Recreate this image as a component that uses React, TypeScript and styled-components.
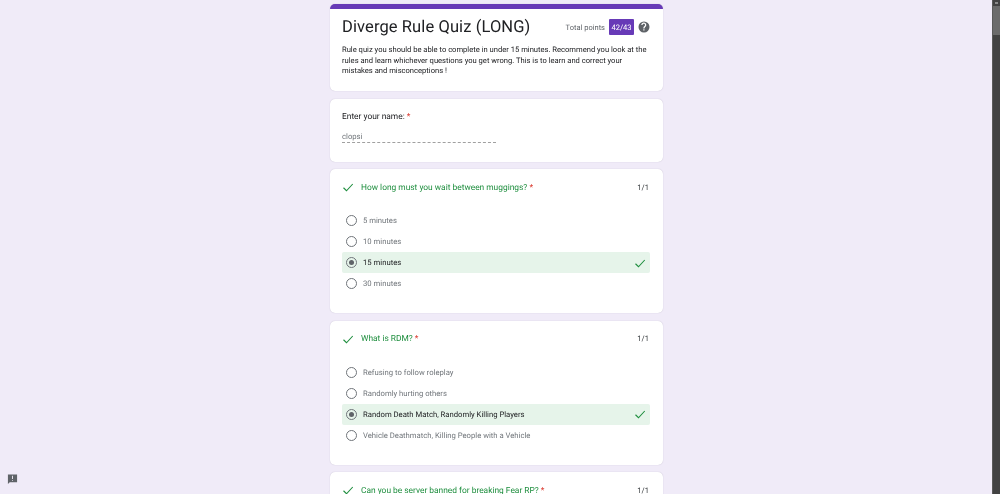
import styled, { createGlobalStyle } from "styled-components";

const purple = "#673ab7";
const green = "#1e8e3e";

const GlobalStyle = createGlobalStyle`
html, body {
    margin: 0;
    height: 100%;
    overflow: hidden;
    background: #f0ebf8;
    font-family: Roboto, "Liberation Sans", sans-serif;
    text-rendering: geometricPrecision;
}
`;

const Page = styled.div`
    display: flex;
    height: 494px;
    overflow: hidden;
`;

const Main = styled.main`
    flex: 1;
    height: 494px;
    overflow: hidden;
    display: flex;
    flex-direction: column;
    align-items: center;
    gap: 7.5px;
    padding-top: 4px;
    box-sizing: border-box;
    filter: blur(0.45px);
`;

const Scrollbar = styled.div`
    width: 8px;
    background: #424242;
    display: flex;
    flex-direction: column;
    border-left: 1px solid #5a5a5a;
    box-sizing: border-box;
`;

const ScrollArrow = styled.div`
    height: 6px;
    display: flex;
    align-items: center;
    justify-content: center;
    &::after {
        content: "";
        width: 3px;
        height: 2px;
        background: #8a8a8a;
    }
`;

const ScrollThumb = styled.div`
    height: 29px;
    background: #6b6b6b;
`;

const Card = styled.section<{ $height: number }>`
    width: 333px;
    height: ${({ $height }) => $height}px;
    flex-shrink: 0;
    background: #fff;
    border-radius: 5px;
    box-shadow: 0 0 1px rgba(60, 50, 90, 0.3);
    box-sizing: border-box;
    overflow: hidden;
`;

const HeaderCard = styled(Card)`
    border-top: 5px solid ${purple};
    padding: 0 12.5px;
`;

const TitleRow = styled.div`
    display: flex;
    align-items: center;
    height: 28px;
    margin-top: 4px;
`;

const Title = styled.h1`
    margin: 0;
    flex: 1;
    font-size: 16.5px;
    font-weight: 400;
    color: #202124;
    letter-spacing: 0.1px;
`;

const TotalLabel = styled.span`
    font-size: 7.5px;
    color: #5f6368;
`;

const ScoreBadge = styled.span`
    margin-left: 4px;
    width: 25px;
    height: 16px;
    display: flex;
    align-items: center;
    justify-content: center;
    background: ${purple};
    color: #fff;
    font-size: 7.6px;
    border-radius: 1px;
`;

const HelpIcon = styled.svg`
    margin-left: 4px;
    width: 12px;
    height: 12px;
    fill: #5f6368;
`;

const Description = styled.p`
    margin: 4px 0 0;
    font-size: 7.6px;
    line-height: 10.5px;
    color: #202124;
`;

const NameCard = styled(Card)`
    padding: 13px 12.5px 0;
`;

const Label = styled.div`
    font-size: 8.4px;
    line-height: 11px;
    color: #202124;
`;

const Required = styled.span`
    color: #d93025;
`;

const NameValue = styled.div`
    margin-top: 8px;
    width: 154px;
    height: 12px;
    font-size: 7.7px;
    line-height: 11px;
    color: #70757a;
    border-bottom: 1px dashed #a0a0a0;
    box-sizing: border-box;
`;

const QuestionCard = styled(Card)`
    padding: 12px 12.5px 0;
`;

const QuestionRow = styled.div`
    display: flex;
    align-items: center;
    height: 12px;
`;

const QuestionTitle = styled.div`
    flex: 1;
    margin-left: 7px;
    padding-top: 1px;
    font-size: 8.4px;
    color: ${green};
`;

const Score = styled.span`
    font-size: 7.6px;
    color: #3c4043;
    margin-right: 1px;
`;

const Options = styled.div`
    margin-top: 17px;
    display: flex;
    flex-direction: column;
`;

const Option = styled.div<{ $correct?: boolean }>`
    height: 21px;
    display: flex;
    align-items: center;
    padding: 0 4px;
    border-radius: 2px;
    background: ${({ $correct }) => ($correct ? "#e6f4ea" : "transparent")};
    font-size: 7.7px;
    color: ${({ $correct }) => ($correct ? "#202124" : "#70757a")};
`;

const Radio = styled.span<{ $checked?: boolean }>`
    width: 11px;
    height: 11px;
    flex-shrink: 0;
    border: 1px solid #70757a;
    border-radius: 50%;
    box-sizing: border-box;
    margin-right: 6px;
    display: flex;
    align-items: center;
    justify-content: center;
    &::after {
        content: "";
        width: 5px;
        height: 5px;
        border-radius: 50%;
        background: ${({ $checked }) => ($checked ? "#5f6368" : "transparent")};
    }
`;

const OptionText = styled.span`
    flex: 1;
`;

const CheckSvg = styled.svg`
    width: 12px;
    height: 12px;
    fill: none;
    stroke: ${green};
    stroke-width: 2.2;
    flex-shrink: 0;
`;

const Feedback = styled.svg`
    position: fixed;
    left: 7px;
    bottom: 9px;
    width: 11px;
    height: 12px;
    fill: #5f6368;
`;

function Check() {
    return (
        <CheckSvg viewBox="0 0 24 24">
            <path d="M3 13.5l6 6L21.500 6" />
        </CheckSvg>
    );
}

type QuestionData = {
    title: string;
    height: number;
    options: string[];
    answer: number;
};

const questions: QuestionData[] = [
    {
        title: "How long must you wait between muggings?",
        height: 144,
        options: ["5 minutes", "10 minutes", "15 minutes", "30 minutes"],
        answer: 2,
    },
    {
        title: "What is RDM?",
        height: 144,
        options: [
            "Refusing to follow roleplay",
            "Randomly hurting others",
            "Random Death Match, Randomly Killing Players",
            "Vehicle Deathmatch, Killing People with a Vehicle",
        ],
        answer: 2,
    },
    {
        title: "Can you be server banned for breaking Fear RP?",
        height: 144,
        options: [],
        answer: -1,
    },
];

function Question({ title, height, options, answer }: QuestionData) {
    return (
        <QuestionCard $height={height}>
            <QuestionRow>
                <Check />
                <QuestionTitle>
                    {title} <Required>*</Required>
                </QuestionTitle>
                <Score>1/1</Score>
            </QuestionRow>
            <Options>
                {options.map((option, i) => (
                    <Option key={option} $correct={i === answer}>
                        <Radio $checked={i === answer} />
                        <OptionText>{option}</OptionText>
                        {i === answer && <Check />}
                    </Option>
                ))}
            </Options>
        </QuestionCard>
    );
}

export default function App() {
    return (
        <Page>
            <GlobalStyle />
            <Main>
                <HeaderCard $height={87}>
                    <TitleRow>
                        <Title>Diverge Rule Quiz (LONG)</Title>
                        <TotalLabel>Total points</TotalLabel>
                        <ScoreBadge>42/43</ScoreBadge>
                        <HelpIcon viewBox="0 0 24 24">
                            <path d="M12 1a11 11 0 1 0 0 22 11 11 0 0 0 0-22zm1 18h-2.400v-2.400H13V19zm2.500-8.200l-1 1.100c-.9.900-1.400 1.600-1.400 3h-2.500v-.6c0-1.200.5-2.300 1.400-3.200l1.400-1.500c.4-.4.7-1 .7-1.600 0-1.300-1-2.400-2.300-2.400S9 6.700 9 8H6.600c0-2.700 2.200-4.800 5-4.800s5 2.100 5 4.800c0 1.100-.4 2-1.100 2.800z" />
                        </HelpIcon>
                    </TitleRow>
                    <Description>
                        Rule quiz you should be able to complete in under 15 minutes. Recommend you look at the rules and learn whichever questions you get wrong. This is to learn and correct your mistakes and misconceptions !
                    </Description>
                </HeaderCard>
                <NameCard $height={63}>
                    <Label>
                        Enter your name: <Required>*</Required>
                    </Label>
                    <NameValue>clopsi</NameValue>
                </NameCard>
                {questions.map((q) => (
                    <Question key={q.title} {...q} />
                ))}
            </Main>
            <Scrollbar>
                <ScrollArrow />
                <ScrollThumb />
            </Scrollbar>
            <Feedback viewBox="0 0 24 24">
                <path d="M2 2h20v17H6l-4 4V2zm9 3v7h2V5h-2zm0 9v2h2v-2h-2z" fillRule="evenodd" />
            </Feedback>
        </Page>
    );
}
